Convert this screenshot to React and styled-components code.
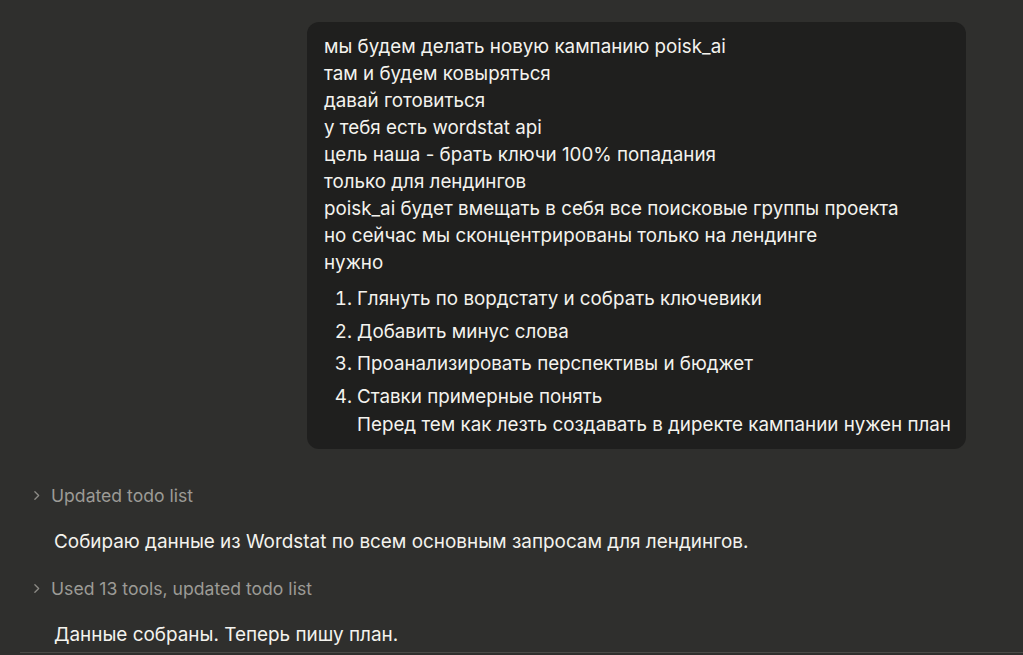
import React from "react";
import styled, { createGlobalStyle } from "styled-components";

const Global = createGlobalStyle`
  html, body { margin: 0; padding: 0; background: #2f2f2d; }
  body { font-family: Inter, "Noto Sans", sans-serif; -webkit-font-smoothing: antialiased; }
`;

const Page = styled.div`
  width: 1023px;
  height: 655px;
  overflow: hidden;
  background: #2f2f2d;
  display: flex;
  flex-direction: column;
  box-sizing: border-box;
  padding-top: 22px;
  position: relative;
`;

const UserRow = styled.div`
  display: flex;
  justify-content: flex-end;
  padding-right: 57px;
`;

const Bubble = styled.div`
  width: 659px;
  box-sizing: border-box;
  background: #1f1f1e;
  border-radius: 12px;
  padding: 11px 16px 10px 17px;
  color: #f4f3ee;
  font-size: 18.8px;
  line-height: 27px;
`;

const Line = styled.div`
  white-space: nowrap;
`;

const List = styled.ol`
  margin: 9px 0 0 0;
  padding: 0 0 0 33px;
`;

const Item = styled.li`
  line-height: 28px;
  margin-bottom: 4.5px;
  white-space: nowrap;
  &:last-child { margin-bottom: 0; }
`;

const Feed = styled.div`
  display: flex;
  flex-direction: column;
  padding-left: 30px;
  margin-top: 33px;
`;

const ToolRow = styled.div`
  display: flex;
  align-items: center;
  gap: 8px;
  height: 28px;
  color: #9c9b96;
  font-size: 17.6px;
`;

const Chevron = styled.svg`
  width: 13px;
  height: 13px;
  flex: none;
`;

const Message = styled.div`
  color: #f4f3ee;
  font-size: 18.9px;
  line-height: 28px;
  padding-left: 24px;
  margin: 18px 0 19px 0;
  white-space: nowrap;
`;

const BottomRule = styled.div`
  position: absolute;
  left: 20px;
  right: 0;
  bottom: 2px;
  height: 1px;
  background: #4a4a47;
`;

const ChevronIcon = () => (
  <Chevron viewBox="0 0 12 12" fill="none">
    <path d="M4.5 2.5 L8 6 L4.5 9.5" stroke="#8d8c87" strokeWidth="1.2" strokeLinecap="round" strokeLinejoin="round" />
  </Chevron>
);

const lines = [
  "мы будем делать новую кампанию poisk_ai",
  "там и будем ковыряться",
  "давай готовиться",
  "у тебя есть wordstat api",
  "цель наша - брать ключи 100% попадания",
  "только для лендингов",
  "poisk_ai будет вмещать в себя все поисковые группы проекта",
  "но сейчас мы сконцентрированы только на лендинге",
  "нужно",
];

export default function App() {
  return (
    <Page>
      <Global />
      <UserRow>
        <Bubble>
          {lines.map((l) => (
            <Line key={l}>{l}</Line>
          ))}
          <List>
            <Item>Глянуть по вордстату и собрать ключевики</Item>
            <Item>Добавить минус слова</Item>
            <Item>Проанализировать перспективы и бюджет</Item>
            <Item>
              Ставки примерные понять
              <br />
              Перед тем как лезть создавать в директе кампании нужен план
            </Item>
          </List>
        </Bubble>
      </UserRow>
      <Feed>
        <ToolRow>
          <ChevronIcon />
          <span>Updated todo list</span>
        </ToolRow>
        <Message>Собираю данные из Wordstat по всем основным запросам для лендингов.</Message>
        <ToolRow>
          <ChevronIcon />
          <span>Used 13 tools, updated todo list</span>
        </ToolRow>
        <Message>Данные собраны. Теперь пишу план.</Message>
      </Feed>
      <BottomRule />
    </Page>
  );
}
